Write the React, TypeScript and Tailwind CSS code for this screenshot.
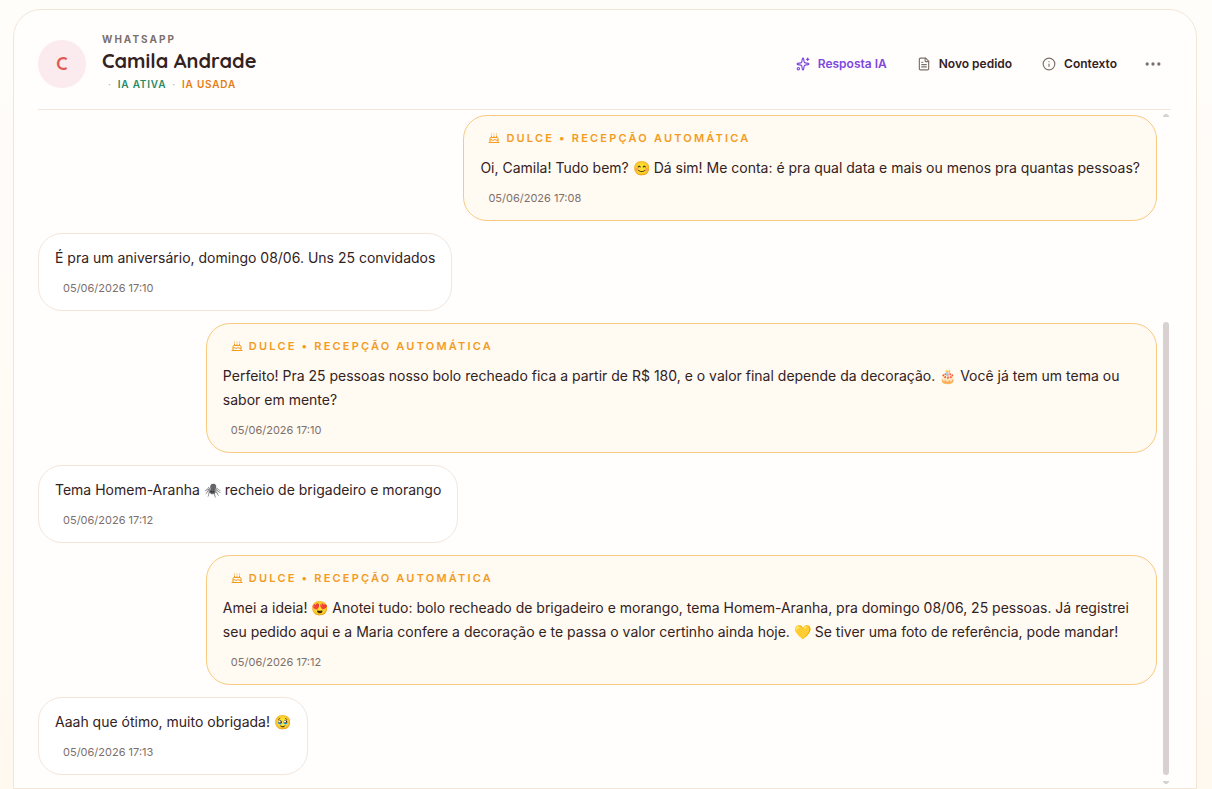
import { CakeIcon, EllipsisIcon, FileTextIcon, InfoIcon, SparklesIcon } from "lucide-react";
import { clsx } from "clsx";

interface Message {
  id: number;
  from: "client" | "assistant";
  text: string;
  sentAt: string;
}

const messages: Message[] = [
  {
    id: 1,
    from: "assistant",
    text: "Oi, Camila! Tudo bem? 😊 Dá sim! Me conta: é pra qual data e mais ou menos pra quantas pessoas?",
    sentAt: "05/06/2026 17:08",
  },
  {
    id: 2,
    from: "client",
    text: "É pra um aniversário, domingo 08/06. Uns 25 convidados",
    sentAt: "05/06/2026 17:10",
  },
  {
    id: 3,
    from: "assistant",
    text: "Perfeito! Pra 25 pessoas nosso bolo recheado fica a partir de R$ 180, e o valor final depende da decoração. 🎂 Você já tem um tema ou sabor em mente?",
    sentAt: "05/06/2026 17:10",
  },
  {
    id: 4,
    from: "client",
    text: "Tema Homem-Aranha 🕷️ recheio de brigadeiro e morango",
    sentAt: "05/06/2026 17:12",
  },
  {
    id: 5,
    from: "assistant",
    text: "Amei a ideia! 😍 Anotei tudo: bolo recheado de brigadeiro e morango, tema Homem-Aranha, pra domingo 08/06, 25 pessoas. Já registrei seu pedido aqui e a Maria confere a decoração e te passa o valor certinho ainda hoje. 💛 Se tiver uma foto de referência, pode mandar!",
    sentAt: "05/06/2026 17:12",
  },
  {
    id: 6,
    from: "client",
    text: "Aaah que ótimo, muito obrigada! 🥹",
    sentAt: "05/06/2026 17:13",
  },
];

const ConversationHeader = () => (
  <header className="flex items-center justify-between border-b border-[#f3e6dc] pt-[21px] pb-3">
    <div className="flex items-center gap-4">
      <div className="flex size-12 items-center justify-center rounded-full bg-[#fbeaee] font-['Quicksand','Lato',sans-serif] text-lg font-bold text-[#de5a52]">
        C
      </div>
      <div className="pb-1">
        <p className="text-[10px] leading-4 font-bold tracking-[0.2em] text-[#7d706b] uppercase">WhatsApp</p>
        <h1 className="font-['Quicksand','Lato',sans-serif] text-xl leading-7 font-bold text-[#33221e]">
          Camila Andrade
        </h1>
        <p className="flex gap-1.5 pl-1.5 text-[10px] leading-[18px] font-semibold tracking-[0.08em] uppercase">
          <span className="text-[#258a64]">
            <span className="mr-1.5 font-normal text-[#b8aaa4]">·</span>IA ativa
          </span>
          <span className="text-[#e67c10]">
            <span className="mr-1.5 font-normal text-[#b8aaa4]">·</span>IA usada
          </span>
        </p>
      </div>
    </div>

    <div className="flex items-center gap-1.5 text-xs font-semibold text-[#33221e]">
      <button type="button" className="flex h-9 items-center gap-2 px-3 text-[#8047dd]">
        <SparklesIcon className="size-3.5" />
        Resposta IA
      </button>
      <button type="button" className="flex h-9 items-center gap-2 px-3">
        <FileTextIcon className="size-3.5 text-[#7d706b]" />
        Novo pedido
      </button>
      <button type="button" className="flex h-9 items-center gap-2 px-3">
        <InfoIcon className="size-3.5 text-[#7d706b]" />
        Contexto
      </button>
      <button type="button" aria-label="Mais opções" className="flex size-9 items-center justify-center text-[#7d706b]">
        <EllipsisIcon className="size-5" strokeWidth={2} />
      </button>
    </div>
  </header>
);

const MessageBubble = ({ message }: { message: Message }) => {
  const isAssistant = message.from === "assistant";

  return (
    <li
      className={clsx(
        "max-w-[85%] rounded-3xl border px-4 py-3",
        isAssistant ? "self-end border-[#f9ca80] bg-[#fffaf2]" : "self-start border-[#f3e6dc] bg-white",
      )}
    >
      {isAssistant && (
        <p className="mb-2 flex items-center gap-1.5 px-2 text-[11px] leading-5 font-semibold tracking-[0.2em] text-[#f39c1f] uppercase">
          <CakeIcon className="size-3" />
          Dulce • Recepção automática
        </p>
      )}
      <p className="text-sm leading-6 text-[#33221e]">{message.text}</p>
      <time className="mt-2 block px-2 text-[11px] leading-5 text-[#7d706b]">{message.sentAt}</time>
    </li>
  );
};

const ScrollTrack = () => (
  <div aria-hidden="true" className="flex w-2.5 flex-col items-center gap-1.5 pt-1 pb-1">
    <svg viewBox="0 0 6 3" className="h-[3px] w-1.5 fill-[#d8d1cf]">
      <path d="M0 3V2L2 0H4L6 2V3Z" />
    </svg>
    <div className="flex w-1.5 flex-1 flex-col justify-end">
      <div className="h-[69.5%] rounded-full bg-[#d8d1cf]" />
    </div>
    <svg viewBox="0 0 6 3" className="h-[3px] w-1.5 fill-[#d8d1cf]">
      <path d="M0 0V1L2 3H4L6 1V0Z" />
    </svg>
  </div>
);

export default function App() {
  return (
    <div className="flex min-h-screen flex-col bg-linear-to-b from-[#fffdfa] to-[#fff9f0] pt-[9px] pr-[15px] pl-[13px] font-['Inter',sans-serif]">
      <main className="flex flex-1 flex-col rounded-t-[28px] border border-[#f3e6d6] bg-[#fffefd] pr-[25px] pl-6">
        <ConversationHeader />
        <section aria-label="Mensagens" className="flex flex-1 gap-1">
          <ul className="flex flex-1 flex-col gap-3 pt-[5px] pb-3">
            {messages.map((message) => (
              <MessageBubble key={message.id} message={message} />
            ))}
          </ul>
          <ScrollTrack />
        </section>
      </main>
    </div>
  );
}
